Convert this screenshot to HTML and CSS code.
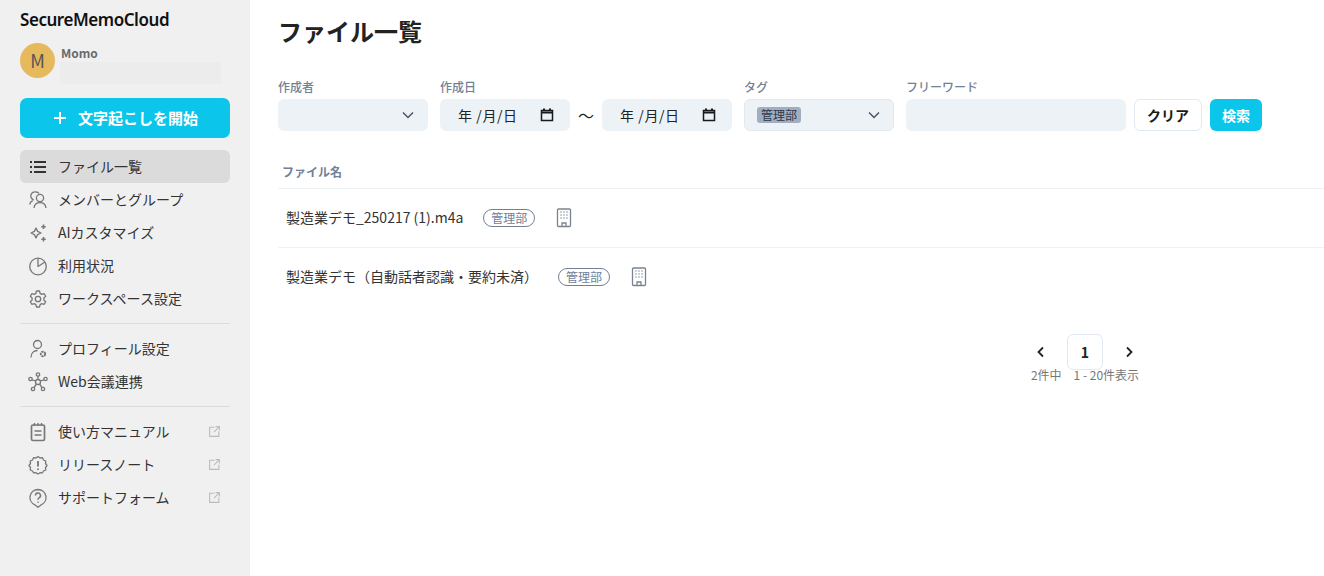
FILE: index.html
```html
<!DOCTYPE html>
<html lang="ja">
<head>
    <meta charset="UTF-8">
    <meta name="viewport" content="width=device-width, initial-scale=1.0">
    <title>ファイル一覧</title>
    <link rel="stylesheet" href="styles.css">
</head>
<body>
    <aside class="sidebar">
        <div class="logo">SecureMemoCloud</div>
        <div class="user">
            <div class="avatar">M</div>
            <div class="user-info">
                <div class="user-name">Momo</div>
                <div class="user-mail"></div>
            </div>
        </div>
        <button class="start-button">
            <svg width="16" height="16" viewBox="0 0 16 16" fill="none" stroke="#fff" stroke-width="2"><path d="M8 2v12M2 8h12"/></svg>
            <span>文字起こしを開始</span>
        </button>
        <nav class="nav">
            <a class="nav-item active">
                <svg class="nav-icon" viewBox="0 0 20 20" fill="none" stroke="#333" stroke-width="1.800"><path d="M6 5h12M6 10h12M6 15h12M2 5h2M2 10h2M2 15h2"/></svg>
                <span>ファイル一覧</span>
            </a>
            <a class="nav-item">
                <svg class="nav-icon" viewBox="0 0 20 20" fill="none" stroke="#777" stroke-width="1.300"><circle cx="12" cy="8" r="3.600"/><path d="M6 18c.4-3.800 2.800-5.400 6-5.400s5.600 1.600 6 5.400M5.700 9.800A3.600 3.600 0 0 1 8 2a3.600 3.600 0 0 1 3 1.400M1.800 14.500c.2-2 1.200-3.300 3-3.900"/></svg>
                <span>メンバーとグループ</span>
            </a>
            <a class="nav-item">
                <svg class="nav-icon" viewBox="0 0 20 20" fill="none" stroke="#777" stroke-width="1.300"><path d="M8 5l1.600 3.400L13 10l-3.400 1.600L8 15l-1.600-3.400L3 10l3.400-1.600z" stroke-linejoin="round"/><path d="M15.500 1.500v4.500M13.300 3.700h4.400M15.500 14v4.500M13.300 16.200h4.400" stroke-width="1.600"/></svg>
                <span>AIカスタマイズ</span>
            </a>
            <a class="nav-item">
                <svg class="nav-icon" viewBox="0 0 20 20" fill="none" stroke="#777" stroke-width="1.300"><circle cx="10" cy="10.500" r="8.300"/><path d="M10 2.200v8.300l7-4.500" stroke-linejoin="round"/></svg>
                <span>利用状況</span>
            </a>
            <a class="nav-item">
                <svg class="nav-icon" viewBox="0 0 20 20" fill="none" stroke="#777" stroke-width="1.300"><circle cx="10" cy="10" r="2.700"/><path d="M8.500 2h3l.6 2.400 1.700 1 2.400-.7 1.500 2.600-1.800 1.700v2l1.800 1.700-1.500 2.600-2.400-.7-1.700 1-.6 2.400h-3l-.6-2.400-1.700-1-2.400.7-1.500-2.600 1.800-1.700v-2L2.300 7.300l1.500-2.600 2.400.7 1.700-1z" stroke-linejoin="round"/></svg>
                <span>ワークスペース設定</span>
            </a>
            <div class="nav-divider"></div>
            <a class="nav-item">
                <svg class="nav-icon" viewBox="0 0 20 20" fill="none" stroke="#777" stroke-width="1.300"><circle cx="9.500" cy="5.500" r="4"/><path d="M3 18.500c0-4 2.500-7 6.500-7"/><circle cx="15" cy="15" r="2.200" stroke-width="1.900" stroke-dasharray="2 .6"/></svg>
                <span>プロフィール設定</span>
            </a>
            <a class="nav-item">
                <svg class="nav-icon" viewBox="0 0 20 20" fill="none" stroke="#777" stroke-width="1.300"><circle cx="10" cy="10" r="2.500"/><circle cx="10" cy="2.500" r="1.700"/><circle cx="2.500" cy="7" r="1.700"/><circle cx="17.500" cy="7" r="1.700"/><circle cx="5" cy="17" r="1.700"/><circle cx="15" cy="17" r="1.700"/><path d="M10 4.200v3.300M4 7.800l3.800 1.200M16 7.800L12.200 9M6 15.500l2.500-3.500M14 15.500L11.500 12"/></svg>
                <span>Web会議連携</span>
            </a>
            <div class="nav-divider"></div>
            <a class="nav-item">
                <svg class="nav-icon" viewBox="0 0 20 20" fill="none" stroke="#777" stroke-width="1.700"><rect x="3.500" y="3" width="13" height="15.500" rx="1.500"/><path d="M6.500 1v3M10 1v3M13.500 1v3M6.500 9h7M6.500 13h7" stroke-width="1.400"/></svg>
                <span>使い方マニュアル</span>
                <svg class="ext-icon" viewBox="0 0 12 12" fill="none" stroke="#bbb" stroke-width="1"><path d="M6 2H1.500v8.500H10V6M7 1.500h3.500V5M10.500 1.500L5.500 6.500"/></svg>
            </a>
            <a class="nav-item">
                <svg class="nav-icon" viewBox="0 0 20 20" fill="none" stroke="#777" stroke-width="1.300"><path d="M10 1.500l2 1.500 2.500-.3 1 2.300 2.300 1-.3 2.500 1.500 2-1.500 2 .3 2.500-2.300 1-1 1.800-2.500-.1-2 1.300-2-1.300-2.500.1-1-1.800-2.300-1 .3-2.500-1.500-2 1.500-2-.3-2.500 2.300-1 1-2.300 2.500.3z" stroke-linejoin="round"/><path d="M10 6v5.500M10 13.500v1.500" stroke-width="1.800"/></svg>
                <span>リリースノート</span>
                <svg class="ext-icon" viewBox="0 0 12 12" fill="none" stroke="#bbb" stroke-width="1"><path d="M6 2H1.500v8.500H10V6M7 1.500h3.500V5M10.500 1.500L5.500 6.500"/></svg>
            </a>
            <a class="nav-item">
                <svg class="nav-icon" viewBox="0 0 20 20" fill="none" stroke="#777" stroke-width="1.300"><path d="M10 1.500a8 8 0 0 1 3 15.400L10 19.300l-3-2.400A8 8 0 0 1 10 1.500z" stroke-linejoin="round"/><path d="M7.500 7.500a2.500 2.500 0 1 1 3.700 2.200c-.8.500-1.200 1-1.200 2M10 13.500v1.300" stroke-width="1.500"/></svg>
                <span>サポートフォーム</span>
                <svg class="ext-icon" viewBox="0 0 12 12" fill="none" stroke="#bbb" stroke-width="1"><path d="M6 2H1.500v8.500H10V6M7 1.500h3.500V5M10.500 1.500L5.500 6.500"/></svg>
            </a>
        </nav>
    </aside>

    <main class="main">
        <h1>ファイル一覧</h1>
        <div class="filters">
            <div class="filter-group">
                <label>作成者</label>
                <div class="field select-field w-creator">
                    <svg class="chevron" width="12" height="8" viewBox="0 0 12 8" fill="none" stroke="#4a5568" stroke-width="1.500"><path d="M1 1.500l5 5 5-5"/></svg>
                </div>
            </div>
            <div class="filter-group">
                <label>作成日</label>
                <div class="date-range">
                    <div class="field date-field">
                        <span class="date-text">年 /月/日</span>
                        <svg width="14" height="14" viewBox="0 0 14 14" fill="none" stroke="#1a1a1a" stroke-width="1.500"><rect x="1.500" y="2.500" width="11" height="10"/><path d="M1 4.500h12M4 0.500v2M10 0.500v2" stroke-width="2"/></svg>
                    </div>
                    <span class="tilde">〜</span>
                    <div class="field date-field">
                        <span class="date-text">年 /月/日</span>
                        <svg width="14" height="14" viewBox="0 0 14 14" fill="none" stroke="#1a1a1a" stroke-width="1.500"><rect x="1.500" y="2.500" width="11" height="10"/><path d="M1 4.500h12M4 0.500v2M10 0.500v2" stroke-width="2"/></svg>
                    </div>
                </div>
            </div>
            <div class="filter-group">
                <label>タグ</label>
                <div class="field select-field w-tag bordered">
                    <span class="tag-chip">管理部</span>
                    <svg class="chevron" width="12" height="8" viewBox="0 0 12 8" fill="none" stroke="#4a5568" stroke-width="1.500"><path d="M1 1.500l5 5 5-5"/></svg>
                </div>
            </div>
            <div class="filter-group">
                <label>フリーワード</label>
                <div class="field w-word"></div>
            </div>
            <button class="btn btn-clear">クリア</button>
            <button class="btn btn-search">検索</button>
        </div>

        <div class="table">
            <div class="table-head">ファイル名</div>
            <div class="table-row">
                <span class="file-name">製造業デモ_250217 (1).m4a</span>
                <span class="tag-outline">管理部</span>
                <svg class="building" viewBox="0 0 16 20" fill="none" stroke="#7a8490" stroke-width="1.300"><rect x="1.500" y="1" width="13" height="17.500" rx="1"/><path d="M6 18.500v-3.500h4v3.500"/><path d="M4.500 4h1M7.500 4h1M10.500 4h1M4.500 7h1M7.500 7h1M10.500 7h1M4.500 10h1M7.500 10h1M10.500 10h1" stroke-width="1.300"/></svg>
            </div>
            <div class="table-row">
                <span class="file-name">製造業デモ（自動話者認識・要約未済）</span>
                <span class="tag-outline">管理部</span>
                <svg class="building" viewBox="0 0 16 20" fill="none" stroke="#7a8490" stroke-width="1.300"><rect x="1.500" y="1" width="13" height="17.500" rx="1"/><path d="M6 18.500v-3.500h4v3.500"/><path d="M4.500 4h1M7.500 4h1M10.500 4h1M4.500 7h1M7.500 7h1M10.500 7h1M4.500 10h1M7.500 10h1M10.500 10h1" stroke-width="1.300"/></svg>
            </div>
        </div>

        <div class="pagination">
            <div class="pager">
                <svg width="9" height="12" viewBox="0 0 9 12" fill="none" stroke="#222" stroke-width="1.800"><path d="M7 1.500L2.500 6 7 10.500"/></svg>
                <div class="page-current">1</div>
                <svg width="9" height="12" viewBox="0 0 9 12" fill="none" stroke="#222" stroke-width="1.800"><path d="M2 1.500L6.500 6 2 10.500"/></svg>
            </div>
            <div class="page-info"><span>2件中</span><span>1 - 20件表示</span></div>
        </div>
    </main>
</body>
</html>
```

FILE: styles.css
```css
* {
    box-sizing: border-box;
}
body {
    margin: 0;
    height: 576px;
    overflow: hidden;
    display: flex;
    font-family: "Noto Sans CJK JP", "Noto Sans", sans-serif;
    color: #222;
    background-color: #fff;
}
.sidebar {
    width: 250px;
    height: 576px;
    flex-shrink: 0;
    padding: 9px 20px 0;
    background-color: #f0f0f1;
}
.logo {
    font-family: "Noto Sans", sans-serif;
    font-size: 17px;
    font-weight: 600;
    line-height: 22px;
    color: #111;
    letter-spacing: -0.45px;
}
.user {
    display: flex;
    gap: 6px;
    margin-top: 12px;
}
.avatar {
    width: 35px;
    height: 35px;
    border-radius: 50%;
    background-color: #e6b95c;
    color: #555;
    font-size: 18px;
    line-height: 35px;
    text-align: center;
}
.user-name {
    font-size: 12px;
    font-weight: 700;
    line-height: 20px;
    color: #6b6b6b;
}
.user-mail {
    width: 161px;
    height: 22px;
    margin-top: -1px;
    margin-left: -1px;
    background-color: #ececed;
}
.start-button {
    display: flex;
    align-items: center;
    justify-content: center;
    gap: 10px;
    width: 210px;
    height: 40px;
    margin-top: 14px;
    border: none;
    border-radius: 7px;
    background-color: #0bc5ea;
    color: #fff;
    font-family: inherit;
    font-size: 15px;
    font-weight: 700;
}
.start-button span {
    margin-bottom: 2px;
}
.nav {
    margin-top: 12px;
}
.nav-item {
    display: flex;
    align-items: center;
    height: 33px;
    padding: 0 9px 0 8px;
    gap: 10px;
    border-radius: 6px;
    font-size: 14px;
    color: #333;
}
.nav-item span {
    margin-bottom: 2px;
}
.nav-item.active {
    background-color: #dbdbdc;
}
.nav-icon {
    width: 20px;
    height: 20px;
    flex-shrink: 0;
}
.ext-icon {
    width: 13px;
    height: 13px;
    margin-left: auto;
}
.nav-divider {
    height: 1px;
    margin: 8px 0;
    background-color: #dcdcdd;
}
.main {
    flex: 1;
    padding-left: 28px;
    min-width: 0;
}
h1 {
    margin: 11px 0 0;
    font-size: 24px;
    font-weight: 700;
    line-height: 40px;
    color: #222;
}
.filters {
    display: flex;
    align-items: flex-end;
    gap: 12px;
    margin-top: 27px;
}
.filter-group label {
    display: block;
    font-size: 12px;
    font-weight: 500;
    line-height: 18px;
    margin-bottom: 3px;
    color: #718096;
}
.field {
    height: 32px;
    border-radius: 6px;
    background-color: #edf2f7;
}
.select-field {
    display: flex;
    align-items: center;
    padding: 0 14px 0 13px;
}
.chevron {
    margin-left: auto;
}
.w-creator {
    width: 150px;
}
.w-tag {
    width: 150px;
}
.bordered {
    border: 1px solid #e2e8f0;
    padding: 0 13px 0 12px;
}
.w-word {
    width: 220px;
}
.date-range {
    display: flex;
    align-items: center;
}
.date-field {
    display: flex;
    align-items: center;
    justify-content: space-between;
    width: 130px;
    padding: 0 16px 0 18px;
    font-size: 14px;
    color: #222;
}
.date-text {
    letter-spacing: 0.6px;
}
.tilde {
    width: 32px;
    text-align: center;
    font-size: 16px;
}
.tag-chip {
    padding: 0 4px;
    border-radius: 3px;
    background-color: #a0aec0;
    color: #2d3748;
    font-size: 12px;
    line-height: 16px;
}
.btn {
    height: 32px;
    border-radius: 6px;
    font-family: inherit;
    font-size: 14px;
    font-weight: 700;
}
.btn-clear {
    width: 68px;
    margin-left: -4px;
    margin-right: -4px;
    border: 1px solid #e2e8f0;
    background-color: #fff;
    color: #1a1a1a;
}
.btn-search {
    width: 52px;
    border: none;
    background-color: #0bc5ea;
    color: #fff;
}
.table {
    margin-top: 28px;
}
.table-head {
    height: 30px;
    padding-left: 4px;
    font-size: 12px;
    font-weight: 700;
    line-height: 26px;
    color: #718096;
    border-bottom: 1px solid #edf2f7;
}
.table-row {
    display: flex;
    align-items: center;
    height: 59px;
    padding-left: 8px;
    border-bottom: 1px solid #edf2f7;
    font-size: 14px;
    color: #333;
}
.table-row:last-child {
    border-bottom-color: transparent;
}
.file-name {
    margin-bottom: 2px;
}
.tag-outline {
    margin-left: 20px;
    padding: 0 7px;
    border: 1px solid #718096;
    border-radius: 9px;
    font-size: 12px;
    line-height: 16px;
    color: #718096;
}
.building {
    width: 16px;
    height: 20px;
    margin-left: 21px;
}
.pagination {
    display: flex;
    flex-direction: column;
    align-items: center;
    width: 108px;
    margin: 27px 0 0 753px;
}
.pager {
    display: flex;
    align-items: center;
    justify-content: center;
    gap: 22px;
}
.page-current {
    width: 36px;
    height: 36px;
    border: 1px solid #e2e8f0;
    border-radius: 6px;
    font-size: 14px;
    font-weight: 700;
    line-height: 34px;
    text-align: center;
}
.page-info {
    display: flex;
    gap: 12px;
    font-size: 12px;
    line-height: 16px;
    margin-top: -3px;
    color: #777;
    white-space: nowrap;
}
```
